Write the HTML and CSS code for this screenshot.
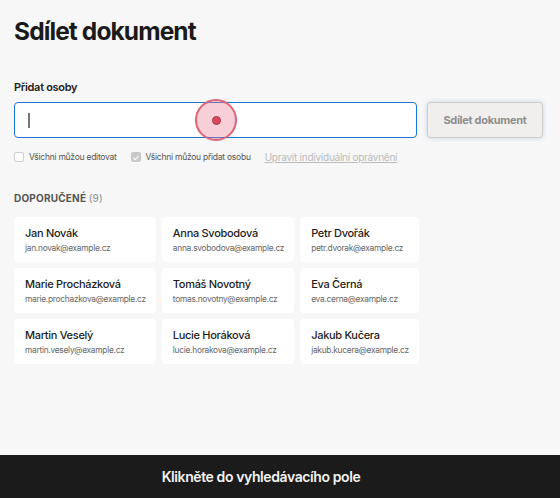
FILE: index.html
```html
<!DOCTYPE html>
<html lang="cs">
<head>
<meta charset="utf-8">
<link rel="stylesheet" href="styles.css">
</head>
<body>
<div class="page">
  <h1 class="title">Sdílet dokument</h1>
  <div class="label">Přidat osoby</div>
  <div class="row">
    <div class="input"><span class="caret"></span></div>
    <button class="share">Sdílet dokument</button>
  </div>
  <div class="opts">
    <label class="opt"><span class="cb"></span>Všichni můžou editovat</label>
    <label class="opt"><span class="cb checked"><svg viewBox="0 0 10 10" width="10" height="10"><path d="M2.2 5.2 L4.2 7.2 L7.9 2.8" fill="none" stroke="#fff" stroke-width="1.4" stroke-linecap="round" stroke-linejoin="round"/></svg></span>Všichni můžou přidat osobu</label>
    <a class="link">Upravit individuální oprávnění</a>
  </div>
  <div class="section">DOPORUČENÉ <span class="count">(9)</span></div>
  <div class="grid">
    <div class="card"><div class="name">Jan Novák</div><div class="mail">jan.novak@example.cz</div></div>
    <div class="card"><div class="name">Anna Svobodová</div><div class="mail">anna.svobodova@example.cz</div></div>
    <div class="card"><div class="name">Petr Dvořák</div><div class="mail">petr.dvorak@example.cz</div></div>
    <div class="card"><div class="name">Marie Procházková</div><div class="mail">marie.prochazkova@example.cz</div></div>
    <div class="card"><div class="name">Tomáš Novotný</div><div class="mail">tomas.novotny@example.cz</div></div>
    <div class="card"><div class="name">Eva Černá</div><div class="mail">eva.cerna@example.cz</div></div>
    <div class="card"><div class="name">Martin Veselý</div><div class="mail">martin.vesely@example.cz</div></div>
    <div class="card"><div class="name">Lucie Horáková</div><div class="mail">lucie.horakova@example.cz</div></div>
    <div class="card"><div class="name">Jakub Kučera</div><div class="mail">jakub.kucera@example.cz</div></div>
  </div>
</div>
<div class="click"><span class="dot"></span></div>
<div class="bar">Klikněte do vyhledávacího pole</div>
</body>
</html>
```

FILE: styles.css
```css
* { box-sizing: border-box; }
html, body { margin: 0; padding: 0; }
body {
  width: 560px;
  height: 498px;
  background: #f7f7f7;
  font-family: Inter, "Noto Sans", sans-serif;
  color: #1c1c1c;
  position: relative;
  overflow: hidden;
}
.page { padding: 16px 14px 0 14px; }
.title {
  margin: 0;
  font-size: 24.5px;
  font-weight: 700;
  line-height: 30px;
  letter-spacing: -0.9px;
  color: #1a1a1a;
}
.label {
  margin-top: 34px;
  font-size: 11px;
  font-weight: 600;
  line-height: 14px;
  letter-spacing: -0.3px;
  color: #222;
}
.row {
  display: flex;
  gap: 10px;
  margin-top: 8px;
  align-items: center;
}
.input {
  width: 403px;
  height: 36px;
  background: #fff;
  border: 1.5px solid #1b74d8;
  border-radius: 4px;
  display: flex;
  align-items: center;
  padding-left: 13px;
}
.caret {
  width: 1.5px;
  height: 15px;
  background: #777;
}
.share {
  width: 116px;
  height: 36px;
  background: #f1efed;
  border: 1px solid #cfcdcb;
  border-radius: 4px;
  font-family: inherit;
  font-size: 11px;
  font-weight: 700;
  letter-spacing: -0.3px;
  color: #8e8e8e;
  box-shadow: 0 0 4px rgba(90, 150, 220, 0.35);
  padding: 0;
}
.opts {
  display: flex;
  align-items: center;
  margin-top: 13px;
  font-size: 8.5px;
  letter-spacing: -0.25px;
  color: #555;
  line-height: 12px;
}
.opt { display: flex; align-items: center; gap: 5px; margin-right: 14px; }
.cb {
  width: 10px;
  height: 10px;
  border: 1px solid #cfcfcf;
  border-radius: 2px;
  background: #fff;
  display: inline-flex;
}
.cb.checked { background: #c9c9c9; border-color: #c9c9c9; }
.cb svg { display: block; }
.link {
  font-size: 10px;
  color: #bbb;
  text-decoration: underline;
  margin-left: 0;
}
.section {
  margin-top: 28px;
  font-size: 10px;
  font-weight: 700;
  letter-spacing: 0.2px;
  color: #555;
  line-height: 14px;
}
.count { font-weight: 500; color: #9a9a9a; }
.grid {
  display: grid;
  grid-template-columns: max-content max-content max-content;
  gap: 6px 6px;
  margin-top: 12px;
}
.card {
  background: #fff;
  border-radius: 4px;
  padding: 9px 10px 0 11px;
  height: 45px;
}
.name {
  font-size: 11px;
  font-weight: 500;
  letter-spacing: -0.3px;
  color: #1c1c1c;
  line-height: 14px;
}
.mail {
  margin-top: 2px;
  font-size: 8.4px;
  letter-spacing: -0.28px;
  color: #666;
  line-height: 12px;
}
.click {
  position: absolute;
  left: 195px;
  top: 99px;
  width: 42px;
  height: 42px;
  border-radius: 50%;
  background: rgba(235, 110, 130, 0.33);
  border: 2px solid #df6276;
  display: flex;
  align-items: center;
  justify-content: center;
}
.dot {
  width: 9px;
  height: 9px;
  border-radius: 50%;
  background: #d9485e;
  border: 1px solid #a8384a;
}
.bar {
  position: absolute;
  left: 0;
  right: 0;
  bottom: 0;
  height: 43px;
  background: #1b1b1b;
  color: #f2f2f2;
  font-size: 14px;
  font-weight: 600;
  letter-spacing: -0.4px;
  display: flex;
  align-items: center;
  justify-content: center;
  padding-right: 38px;
}
```
